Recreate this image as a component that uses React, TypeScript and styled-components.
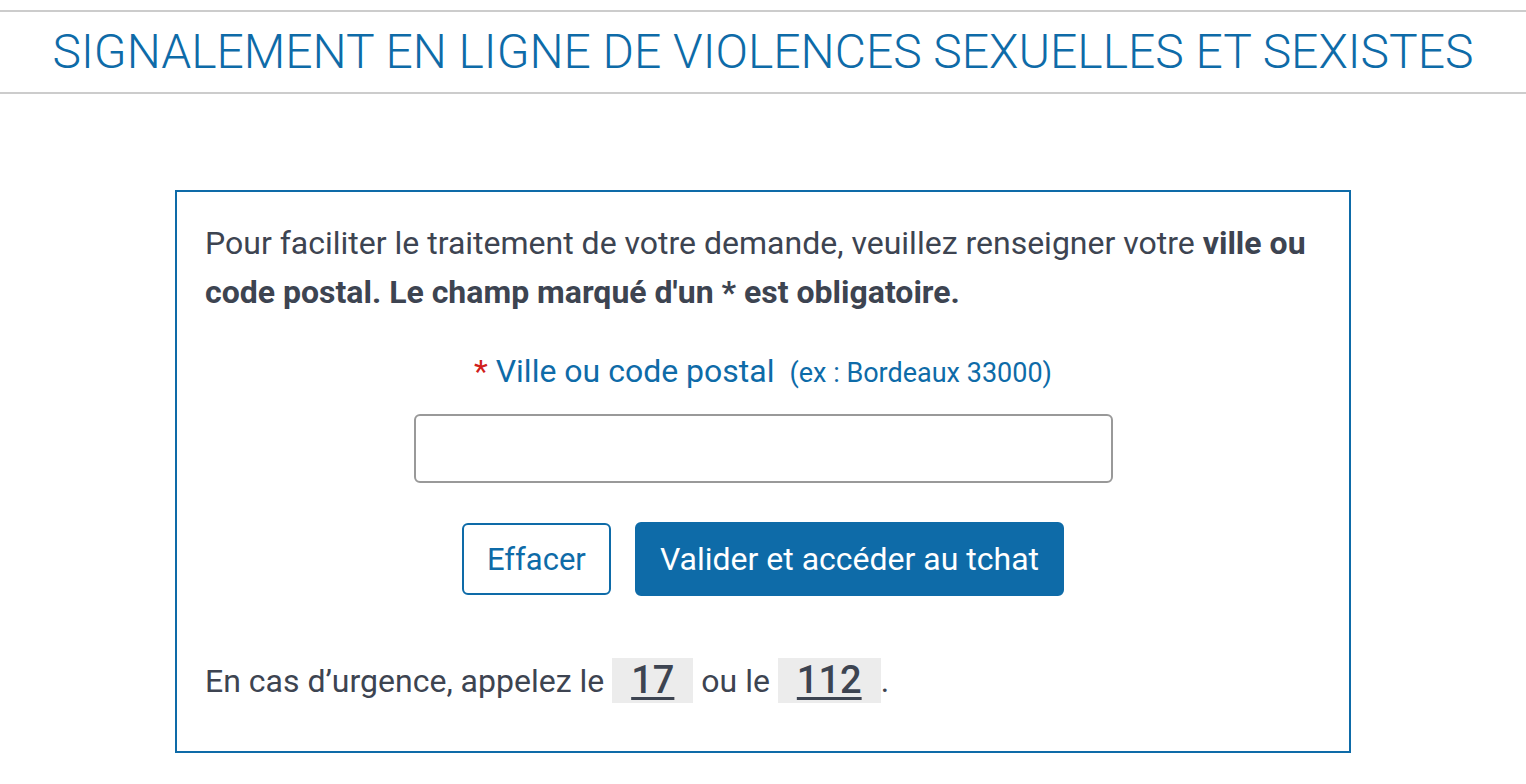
import React, { useState } from "react";
import styled, { createGlobalStyle } from "styled-components";

const GlobalStyle = createGlobalStyle`
  body {
    margin: 0;
    background: #fff;
    font-family: Roboto, "Noto Sans", Arial, sans-serif;
  }
  * {
    box-sizing: border-box;
  }
`;

const App: React.FC = () => {
  const [city, setCity] = useState("");

  return (
    <>
      <GlobalStyle />
      <Page>
        <Header>
          <Title>SIGNALEMENT EN LIGNE DE VIOLENCES SEXUELLES ET SEXISTES</Title>
        </Header>
        <FormBox>
          <Intro>
            Pour faciliter le traitement de votre demande, veuillez renseigner
            votre <strong>ville ou code postal. Le champ marqué d'un * est obligatoire.</strong>
          </Intro>
          <Field>
            <Label htmlFor="city">
              <Required>*</Required> Ville ou code postal
              <Hint>(ex : Bordeaux 33000)</Hint>
            </Label>
            <CityInput
              id="city"
              value={city}
              onChange={(e) => setCity(e.target.value)}
            />
          </Field>
          <Actions>
            <Button $variant="outline" onClick={() => setCity("")}>
              Effacer
            </Button>
            <Button $variant="primary">Valider et accéder au tchat</Button>
          </Actions>
          <Emergency>
            En cas d’urgence, appelez le <PhoneLink href="#">17</PhoneLink> ou
            le <PhoneLink href="#">112</PhoneLink>.
          </Emergency>
        </FormBox>
      </Page>
    </>
  );
};

const Page = styled.div`
  padding-top: 10px;
  padding-bottom: 30px;
`;

const Header = styled.header`
  border-top: 2px solid #cccccc;
  border-bottom: 2px solid #cccccc;
  height: 84px;
  display: flex;
  align-items: center;
  justify-content: center;
`;

const Title = styled.h1`
  margin: 0;
  font-size: 48px;
  font-weight: 300;
  color: #0e6ba8;
  line-height: 56px;
`;

const FormBox = styled.section`
  width: 1176px;
  margin: 96px auto 0;
  border: 2px solid #0e6ba8;
  padding: 27px 28px 47px;
  display: flex;
  flex-direction: column;
  align-items: stretch;
`;

const Intro = styled.p`
  margin: 0;
  font-size: 32px;
  line-height: 49px;
  color: #3d4451;

  strong {
    font-weight: 700;
  }
`;

const Field = styled.div`
  margin-top: 34px;
  display: flex;
  flex-direction: column;
  align-items: center;
  gap: 21px;
`;

const Label = styled.label`
  font-size: 32px;
  color: #0e6ba8;
  line-height: 40px;
`;

const Required = styled.span`
  color: #d0201b;
`;

const Hint = styled.span`
  font-size: 27px;
  margin-left: 15px;
`;

const CityInput = styled.input`
  width: 699px;
  height: 69px;
  border: 2px solid #999999;
  border-radius: 6px;
  font-size: 30px;
  padding: 0 16px;
  font-family: inherit;
  color: #3d4451;
  outline: none;
`;

const Actions = styled.div`
  margin-top: 39px;
  display: flex;
  justify-content: center;
  align-items: center;
  gap: 24px;
`;

const Button = styled.button<{ $variant: "outline" | "primary" }>`
  font-family: inherit;
  font-size: ${({ $variant }) => ($variant === "primary" ? "32px" : "31px")};
  border-radius: 6px;
  cursor: pointer;
  padding: 0 23px;
  height: ${({ $variant }) => ($variant === "primary" ? "74px" : "72px")};
  border: 2px solid #0e6ba8;
  background: ${({ $variant }) => ($variant === "primary" ? "#0e6ba8" : "#fff")};
  color: ${({ $variant }) => ($variant === "primary" ? "#fff" : "#0e6ba8")};
`;

const Emergency = styled.p`
  margin: 62px 0 0;
  font-size: 32px;
  line-height: 46px;
  color: #3d4451;
`;

const PhoneLink = styled.a`
  display: inline-block;
  vertical-align: top;
  background: #ececec;
  color: #3d4451;
  font-size: 38px;
  font-weight: 500;
  line-height: 45px;
  padding: 0 19px;
  text-decoration: underline;
  text-underline-offset: 4px;
  text-decoration-thickness: 3px;
`;

export default App;
